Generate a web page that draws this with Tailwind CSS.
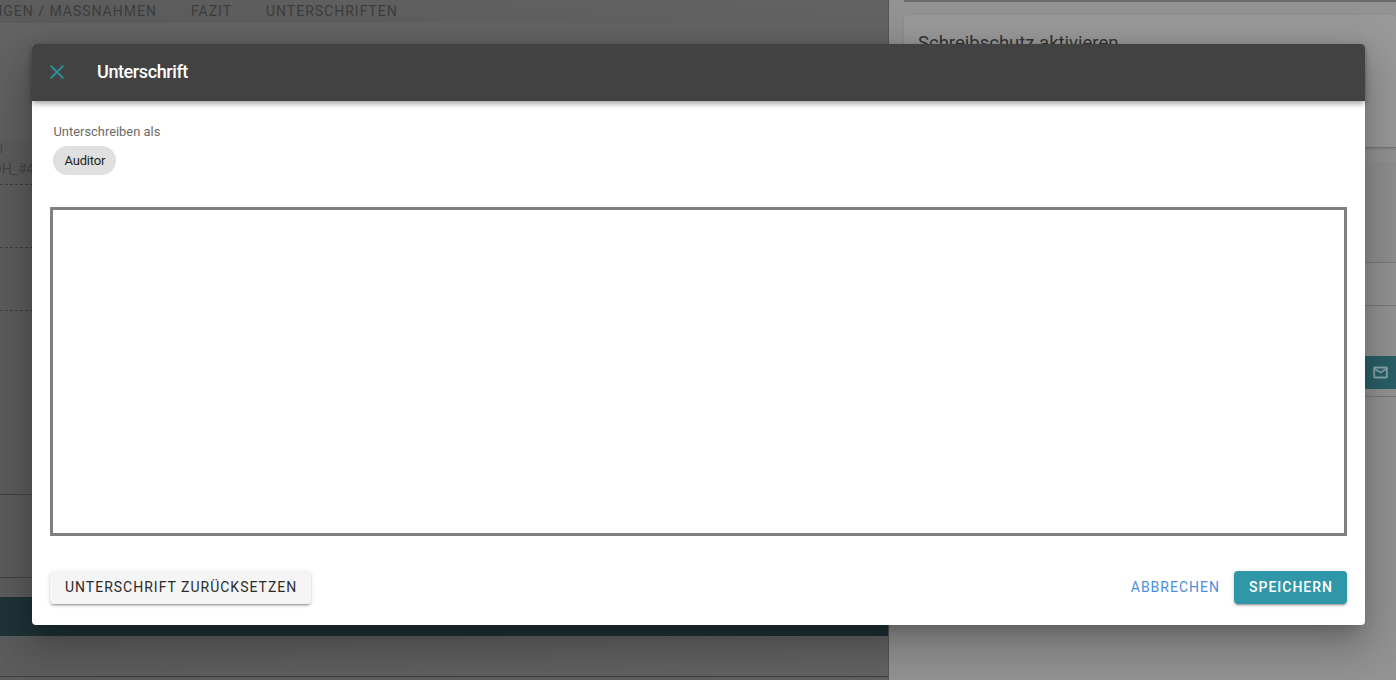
<!DOCTYPE html>
<html lang="de">
 <head>
    <meta charset="UTF-8">
    <meta name="viewport" content="width=device-width, initial-scale=1.0">
    <title>Unterschrift</title>
    <script src="https://cdn.jsdelivr.net/npm/@tailwindcss/browser@4"></script>
 </head>
 <body class="font-[Roboto,sans-serif]">
    <div class="relative flex w-[1396px] h-[680px] overflow-hidden bg-[#6a6a6a]">

        <!-- page behind the dialog -->
        <div class="w-[889px] h-full shrink-0 overflow-hidden bg-gradient-to-r from-[#5c5c5c] to-[#636363] border-r border-[#555]">
            <div class="flex items-center h-[23px] -ml-[86px] text-[14px] tracking-[1px] text-[#3d3d3d] whitespace-nowrap">
                <span>ABWEICHUNGEN / MASSNAHMEN</span>
                <span class="ml-[34px]">FAZIT</span>
                <span class="ml-[34px]">UNTERSCHRIFTEN</span>
            </div>
            <div class="h-[119px] bg-gradient-to-b from-[#646464] to-[#5f5f5f]"></div>
            <div class="h-[43px] text-[12px] leading-[14px] text-[#444] border-b border-dashed border-[#3f3f3f]">
                <div class="-ml-[4px]">0</div>
                <div class="mt-[6px] text-[14px] -ml-[8px]">OH_#4</div>
            </div>
            <div class="h-[63px] border-b border-dashed border-[#3f3f3f]"></div>
            <div class="h-[63px] border-b border-dashed border-[#3f3f3f]"></div>
            <div class="h-[184px] border-b border-[#444]"></div>
            <div class="h-[83px] border-b border-[#444]"></div>
            <div class="h-[19px]"></div>
            <div class="h-[39px] bg-[#1f3338]"></div>
            <div class="h-[41px] border-b border-[#3d3d3d]"></div>
        </div>

        <!-- right side panel -->
        <div class="flex-1 h-full pl-[15px] bg-[#939393]">
            <div class="h-[2px] bg-[#6a6a6a]"></div>
            <div class="mt-[13px] h-[133px] pl-[14px] pt-[16px] rounded-t bg-[#999] shadow-sm text-[18.5px] leading-[24px] text-[#333] border-b border-[#777]">Schreibschutz aktivieren</div>
            <div class="h-[14px]"></div>
            <div class="h-[101px] bg-[#8f8f8f] border-b border-[#7a7a7a]"></div>
            <div class="h-[43px] bg-[#939393] border-b border-[#7a7a7a]"></div>
            <div class="h-[50px]"></div>
            <div class="flex items-center justify-end h-[33px] pr-[7px] bg-[#2a6068]">
                <svg class="w-[17px] h-[17px] text-[#8fa9ad]" viewBox="0 0 24 24" fill="currentColor" stroke="currentColor" stroke-width="0.5"><path d="M22 6c0-1.100-.9-2-2-2H4c-1.100 0-2 .9-2 2v12c0 1.100.9 2 2 2h16c1.100 0 2-.9 2-2V6zm-2 0-8 5-8-5h16zm0 12H4V8l8 5 8-5v10z"/></svg>
            </div>
            <div class="h-[8px] border-b border-[#7a7a7a]"></div>
        </div>

        <!-- dialog -->
        <div class="absolute left-[32px] top-[44px] flex flex-col w-[1333px] h-[581px] rounded bg-white shadow-[0_11px_15px_-7px_rgba(0,0,0,0.2),0_24px_38px_3px_rgba(0,0,0,0.14),0_9px_46px_8px_rgba(0,0,0,0.12)]">
            <div class="flex items-center h-[57px] shrink-0 pl-[13px] pb-[2px] rounded-t bg-[#424242] shadow-[0_2px_4px_-1px_rgba(0,0,0,0.2),0_4px_5px_0_rgba(0,0,0,0.14),0_1px_10px_0_rgba(0,0,0,0.12)]">
                <svg class="w-[24px] h-[24px] text-[#2d8c9c]" viewBox="0 0 24 24" fill="currentColor"><path d="M19 6.410 17.590 5 12 10.590 6.410 5 5 6.410 10.590 12 5 17.590 6.410 19 12 13.410 17.590 19 19 17.590 13.410 12z"/></svg>
                <h1 class="ml-[28px] text-[18px] font-medium tracking-[-0.4px] text-white">Unterschrift</h1>
            </div>

            <div class="flex flex-col flex-1 px-[18px]">
                <p class="mt-[24px] ml-[3.5px] text-[12.9px] leading-[14px] text-[#6b6b6b]">Unterschreiben als</p>
                <span class="flex items-center self-start h-[29px] mt-[7px] ml-[3px] pl-[11.5px] pr-[11px] pt-[1px] rounded-full bg-[#e0e0e0] text-[13px] tracking-[-0.2px] text-[#1f1f1f]">Auditor</span>

                <div class="h-[329px] mt-[32px] border-[3px] border-[#808080] bg-white"></div>

                <div class="flex items-center justify-between mt-[35px]">
                    <button class="h-[33px] pl-[15px] pr-[14px] pb-[1px] rounded bg-[#f5f5f5] text-[14px] font-normal tracking-[1px] text-[#2b2b2b] shadow-[0_3px_1px_-2px_rgba(0,0,0,0.2),0_2px_2px_0_rgba(0,0,0,0.14),0_1px_5px_0_rgba(0,0,0,0.12)]">UNTERSCHRIFT ZURÜCKSETZEN</button>
                    <div class="flex items-center">
                        <button class="h-[33px] pl-[15px] pr-[14px] pb-[1px] rounded text-[14px] tracking-[1px] text-[#4a8fe0]">ABBRECHEN</button>
                        <button class="h-[33px] pl-[15px] pr-[14px] pb-[1px] rounded bg-[#2f97a8] text-[14px] font-medium tracking-[1px] text-white shadow-[0_3px_1px_-2px_rgba(0,0,0,0.2),0_2px_2px_0_rgba(0,0,0,0.14),0_1px_5px_0_rgba(0,0,0,0.12)]">SPEICHERN</button>
                    </div>
                </div>
            </div>
        </div>
    </div>
 </body>
</html>
